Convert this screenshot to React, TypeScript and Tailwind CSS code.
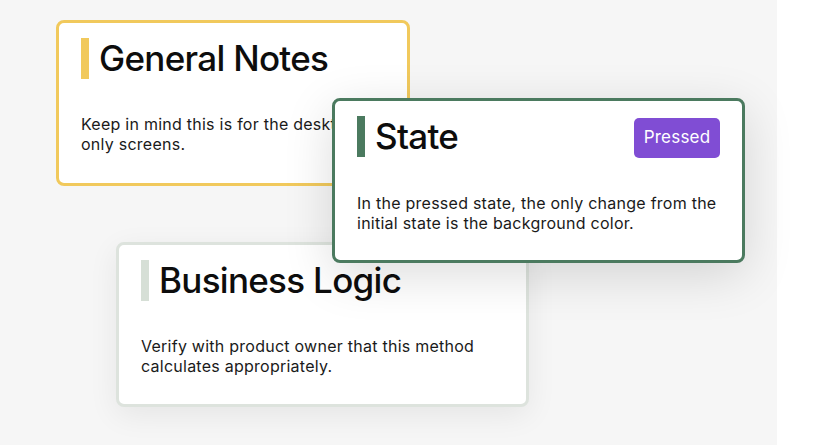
import React from "react";

type CardProps = {
  title: string;
  body: string;
  border: string;
  bar: string;
  className: string;
  badge?: boolean;
};

function Card({ title, body, border, bar, className, badge }: CardProps) {
  return (
    <div className={`absolute bg-white border-[3px] rounded-lg px-[22px] pt-[15px] ${border} ${className}`}>
      <div className="flex items-start justify-between">
        <div className="flex items-center">
          <div className={`w-2 h-[41px] ${bar}`} />
          <div className="ml-[10px] text-[35px] leading-[41px] font-[450] text-[#0d0d0d] tracking-[-0.7px]">{title}</div>
        </div>
        {badge && (
          <div className="mt-[2px] h-[40px] w-[86px] rounded-[5px] bg-[#804dd4] text-white text-[17px] tracking-[0.2px] flex items-center justify-center">
            Pressed
          </div>
        )}
      </div>
      <p className="mt-[35px] text-[16px] leading-[20px] tracking-[0.25px] text-[#1a1a1a]">{body}</p>
    </div>
  );
}

export default function App() {
  return (
    <div className="w-[815px] h-[445px] flex bg-white overflow-hidden" style={{ fontFamily: "Inter, 'Noto Sans', sans-serif" }}>
      <div className="relative w-[777px] h-full bg-[#f6f6f6]">
        <Card
          title="General Notes"
          body="Keep in mind this is for the desktop-only screens."
          border="border-[#f1c95c]"
          bar="bg-[#f1c95c]"
          className="left-[56px] top-[20px] w-[354px] h-[166px]"
        />
        <Card
          title="Business Logic"
          body="Verify with product owner that this method calculates appropriately."
          border="border-[#dde3dd] shadow-[0_8px_30px_rgba(0,0,0,0.07)]"
          bar="bg-[#d6dfd6]"
          className="left-[116px] top-[242px] w-[413px] h-[165px]"
        />
        <Card
          title="State"
          body="In the pressed state, the only change from the initial state is the background color."
          border="border-[#4b7a5f] shadow-[0_12px_50px_rgba(0,0,0,0.14)]"
          bar="bg-[#4b7a5f]"
          className="left-[332px] top-[98px] w-[413px] h-[165px] z-10"
          badge
        />
      </div>
      <div className="flex-1 h-full bg-white" />
    </div>
  );
}
